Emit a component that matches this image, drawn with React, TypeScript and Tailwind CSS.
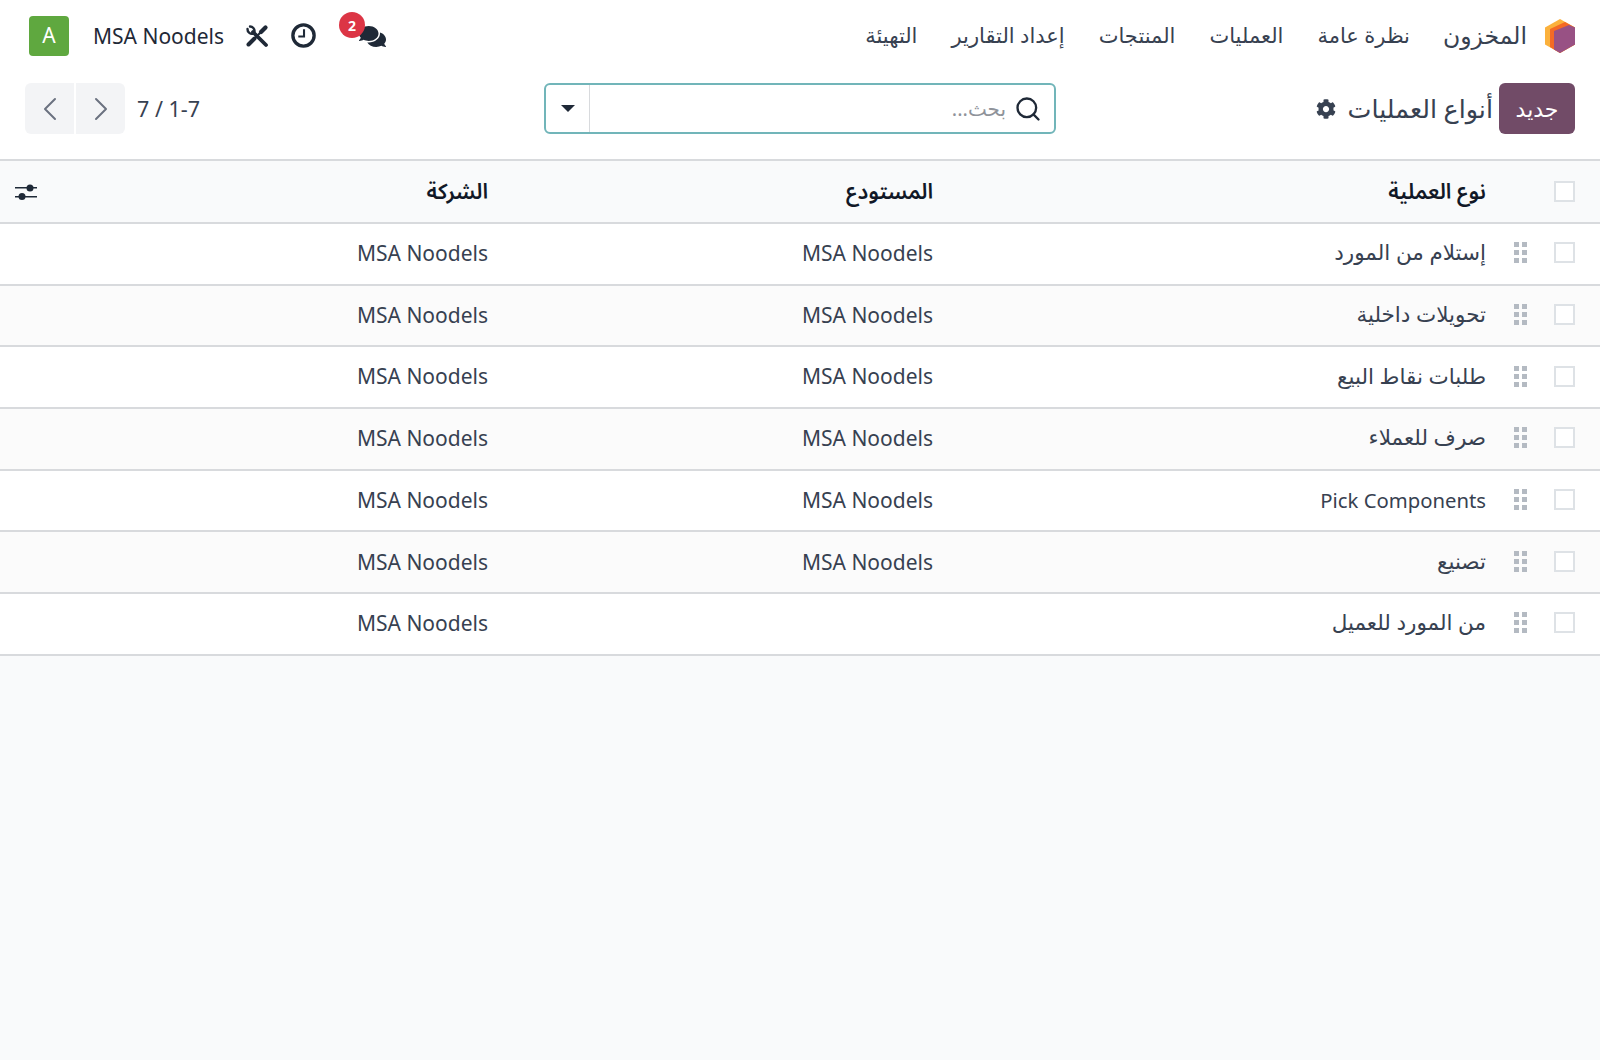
import { ChevronLeft, ChevronRight, Search } from 'lucide-react'
import { FaCog, FaComments } from 'react-icons/fa'

const font = 'font-["Noto_Sans","DejaVu_Sans",sans-serif]'
const headFont = 'font-["Noto_Sans","Noto_Sans_Arabic","DejaVu_Sans",sans-serif]'

const menu = ['نظرة عامة', 'العمليات', 'المنتجات', 'إعداد التقارير', 'التهيئة']

const rows = [
  { name: 'إستلام من المورد', warehouse: 'MSA Noodels' },
  { name: 'تحويلات داخلية', warehouse: 'MSA Noodels' },
  { name: 'طلبات نقاط البيع', warehouse: 'MSA Noodels' },
  { name: 'صرف للعملاء', warehouse: 'MSA Noodels' },
  { name: 'Pick Components', warehouse: 'MSA Noodels', latin: true },
  { name: 'تصنيع', warehouse: 'MSA Noodels' },
  { name: 'من المورد للعميل', warehouse: '' },
]

function Logo() {
  return (
    <svg viewBox="0 0 30 34" className="w-[30px] h-[34px]">
      <path d="M15 0 L30 8.500 V25.500 L15 34 L0 25.500 V8.500 Z" fill="#fbb13c" />
      <path d="M20 3 L30 8.500 V25.500 L15 34 L5 28 V10 Z" fill="#f46a25" />
      <path d="M24 6 L30 8.500 V25.500 L15 34 L9 30.500 V12 Z" fill="#985184" />
    </svg>
  )
}

function ToolsIcon() {
  return (
    <svg viewBox="0 0 24 24" className="w-[24px] h-[24px] text-[#1f2937]" fill="none" stroke="currentColor" strokeLinecap="round">
      <path d="M8 8 L21 21" strokeWidth="3.800" />
      <path d="M2.500 5 A4.500 4.500 0 0 0 8.500 9.500 M5 2.500 A4.500 4.500 0 0 1 9.500 7.500" strokeWidth="2.400" />
      <path d="M3.500 20.500 L9.500 14.500" strokeWidth="4" />
      <path d="M9.500 14.500 L16 8" strokeWidth="2" />
      <path d="M16 8 L20.500 3.500" strokeWidth="4.200" />
    </svg>
  )
}

function ClockIcon() {
  return (
    <svg viewBox="0 0 24 24" className="w-[25px] h-[25px] text-[#1f2937]" fill="none" stroke="currentColor">
      <circle cx="12" cy="12" r="10.200" strokeWidth="3.200" />
      <path d="M12.500 6 V13 H7" strokeWidth="2" />
    </svg>
  )
}

function SlidersIcon() {
  return (
    <svg viewBox="0 0 22 16" className="w-[22px] h-[16px] text-[#1f2937]" fill="currentColor">
      <rect x="0" y="3" width="22" height="1.500" />
      <rect x="0" y="12" width="22" height="1.500" />
      <circle cx="15" cy="4" r="3.500" />
      <circle cx="7" cy="12.500" r="3.500" />
    </svg>
  )
}

function Checkbox({ className = '' }: { className?: string }) {
  return <div className={`w-[21px] h-[21px] border-2 border-[#dee2e6] bg-white shrink-0 ${className}`} />
}

function Grip() {
  return (
    <div className="grid grid-cols-2 gap-[3px] w-[13px] shrink-0 -mt-[2px]">
      {[0, 1, 2, 3, 4, 5].map((i) => (
        <div key={i} className="w-[5px] h-[5px] bg-[#b4bac2]" />
      ))}
    </div>
  )
}

export default function App() {
  return (
    <div dir="rtl" className={`${font} w-full h-[1060px] bg-[#f9fafb] text-[#374151] text-[21px]`}>
      <div className="bg-white">
        <div className="h-[71px] flex items-center justify-between pr-[25px] pl-[29px]">
          <div className="flex items-center">
            <Logo />
            <span className="text-[23.500px] mr-[18px]">المخزون</span>
            <div className="flex items-center gap-[34px] mr-[33px] text-[21px]">
              {menu.map((m) => (
                <span key={m}>{m}</span>
              ))}
            </div>
          </div>
          <div className="flex items-center gap-[22px]">
            <div className="relative ml-[21px] mt-[2px]">
              <FaComments size={27} className="text-[#1f2937]" />
              <span className="absolute -top-[11px] right-[21px] w-[26px] h-[26px] rounded-full bg-[#dc3545] text-white text-[14px] font-bold flex items-center justify-center">2</span>
            </div>
            <ClockIcon />
            <ToolsIcon />
            <span className="text-[#1f2937] pt-[2px] -mr-[1px]">MSA Noodels</span>
            <div className="w-10 h-10 rounded bg-[#5fa83f] text-white flex items-center justify-center mr-[2px]">A</div>
          </div>
        </div>
        <div className="h-[90px] flex items-start justify-between px-[25px] border-b-2 border-[#d8dadd]">
          <div className="flex items-center flex-1 mt-[12px]">
            <button className="w-[76px] h-[51px] rounded-md bg-[#714b67] text-white text-[22px] font-medium">جديد</button>
            <span className="text-[25.400px] mr-[6px]">أنواع العمليات</span>
            <FaCog size={20} className="mr-[12px]" />
          </div>
          <div className="w-[512px] h-[51px] mt-[12px] rounded-md border-2 border-[#71b5b9] flex items-center shrink-0">
            <div className="flex-1 flex items-center pr-[12px] gap-[8px]">
              <Search size={28} className="text-[#1f2937]" strokeWidth={2} />
              <span className="text-[#8f939a] text-[20px]">بحث...</span>
            </div>
            <div className="w-[44px] h-full border-r border-[#d8dadd] flex items-center justify-center">
              <div className="w-0 h-0 border-x-[7px] border-x-transparent border-t-[7px] border-t-[#1f2937]" />
            </div>
          </div>
          <div className="flex-1 flex items-center justify-end mt-[12px] gap-[12px]">
            <span dir="ltr" className="text-[21.500px] pt-[2px]">7 / 1-7</span>
            <div dir="ltr" className="flex gap-[2px]">
              <div className="w-[49px] h-[51px] rounded-l-md bg-[#f3f4f6] flex items-center justify-center">
                <ChevronLeft size={40} strokeWidth={1.200} className="text-[#6b7280]" />
              </div>
              <div className="w-[49px] h-[51px] rounded-r-md bg-[#f3f4f6] flex items-center justify-center">
                <ChevronRight size={40} strokeWidth={1.200} className="text-[#6b7280]" />
              </div>
            </div>
          </div>
        </div>
      </div>
      <div className={`${headFont} h-[63px] flex items-center border-b-2 border-[#d8dadd] font-semibold text-[#111827] text-[21.500px]`}>
        <div className="w-[25px] shrink-0" />
        <Checkbox />
        <div className="w-[68px] shrink-0" />
        <span className="w-[553px] shrink-0">نوع العملية</span>
        <span className="w-[445px] shrink-0">المستودع</span>
        <span className="flex-1">الشركة</span>
        <div className="ml-[15px]">
          <SlidersIcon />
        </div>
      </div>
      {rows.map((r) => (
        <div key={r.name} className="h-[61.700px] flex items-center border-b-2 border-[#d8dadd] bg-white even:bg-[#fbfbfb]">
          <div className="w-[25px] shrink-0" />
          <Checkbox className="-mt-[2px]" />
          <div className="w-[27px] shrink-0" />
          <Grip />
          <div className="w-[28px] shrink-0" />
          <span className={`w-[553px] shrink-0 ${r.latin ? 'text-[20.300px]' : 'text-[21.500px] -mt-[3px]'}`}>{r.name}</span>
          <span className="w-[445px] shrink-0">{r.warehouse}</span>
          <span>MSA Noodels</span>
        </div>
      ))}
    </div>
  )
}
